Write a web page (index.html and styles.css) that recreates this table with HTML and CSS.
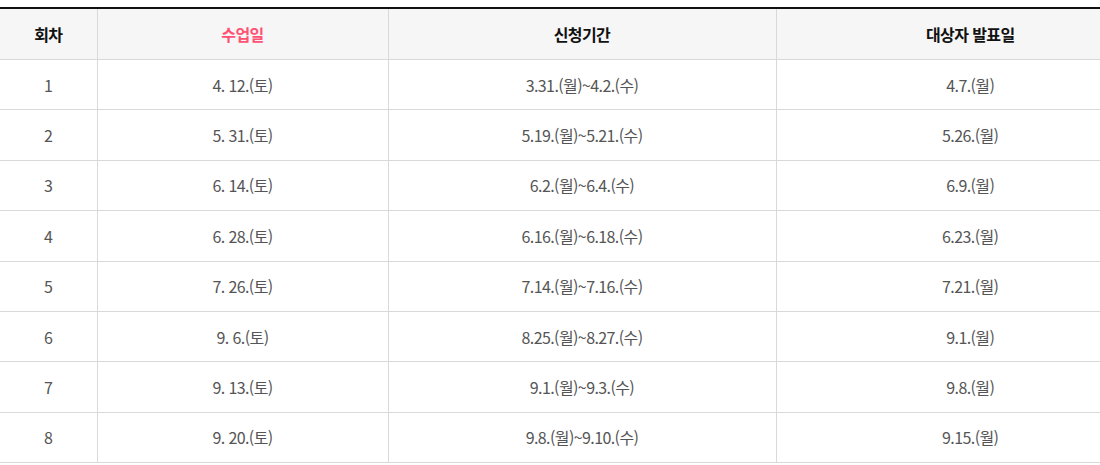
FILE: index.html
```html
<!DOCTYPE html>
<html lang="ko">
<head>
<meta charset="utf-8">
<link rel="stylesheet" href="styles.css">
</head>
<body>
<div class="wrap">
<table class="sched">
<colgroup>
<col class="c1"><col class="c2"><col class="c3"><col class="c4">
</colgroup>
<thead>
<tr><th>회차</th><th class="hl">수업일</th><th>신청기간</th><th>대상자 발표일</th></tr>
</thead>
<tbody>
<tr><td>1</td><td>4. 12.(토)</td><td>3.31.(월)~4.2.(수)</td><td>4.7.(월)</td></tr>
<tr><td>2</td><td>5. 31.(토)</td><td>5.19.(월)~5.21.(수)</td><td>5.26.(월)</td></tr>
<tr><td>3</td><td>6. 14.(토)</td><td>6.2.(월)~6.4.(수)</td><td>6.9.(월)</td></tr>
<tr><td>4</td><td>6. 28.(토)</td><td>6.16.(월)~6.18.(수)</td><td>6.23.(월)</td></tr>
<tr><td>5</td><td>7. 26.(토)</td><td>7.14.(월)~7.16.(수)</td><td>7.21.(월)</td></tr>
<tr><td>6</td><td>9. 6.(토)</td><td>8.25.(월)~8.27.(수)</td><td>9.1.(월)</td></tr>
<tr><td>7</td><td>9. 13.(토)</td><td>9.1.(월)~9.3.(수)</td><td>9.8.(월)</td></tr>
<tr><td>8</td><td>9. 20.(토)</td><td>9.8.(월)~9.10.(수)</td><td>9.15.(월)</td></tr>
</tbody>
</table>
</div>
</body>
</html>
```
FILE: styles.css
```css
html, body {
  margin: 0;
  padding: 0;
  background: #fff;
  overflow: hidden;
}
.wrap {
  padding-top: 7px;
  width: 1100px;
  overflow: hidden;
}
.sched {
  width: 1164px;
  border-collapse: collapse;
  table-layout: fixed;
  border-top: 2px solid #111;
  font-family: "Noto Sans CJK KR", "Noto Sans", sans-serif;
  font-size: 16px;
  letter-spacing: -0.6px;
}
.c1 { width: 97px; }
.c2 { width: 291px; }
.c3 { width: 388px; }
.c4 { width: 388px; }
.sched th,
.sched td {
  text-align: center;
  vertical-align: middle;
  border-bottom: 1px solid #d9d9d9;
  border-left: 1px solid #d9d9d9;
  padding: 0;
  line-height: 20px;
}
.sched th:first-child,
.sched td:first-child {
  border-left: none;
}
.sched th {
  background: #f6f6f6;
  color: #111;
  font-weight: 700;
  height: 50px;
}
.sched th.hl {
  color: #ff5274;
}
.sched td {
  color: #555;
  height: 49.4px;
}
```
